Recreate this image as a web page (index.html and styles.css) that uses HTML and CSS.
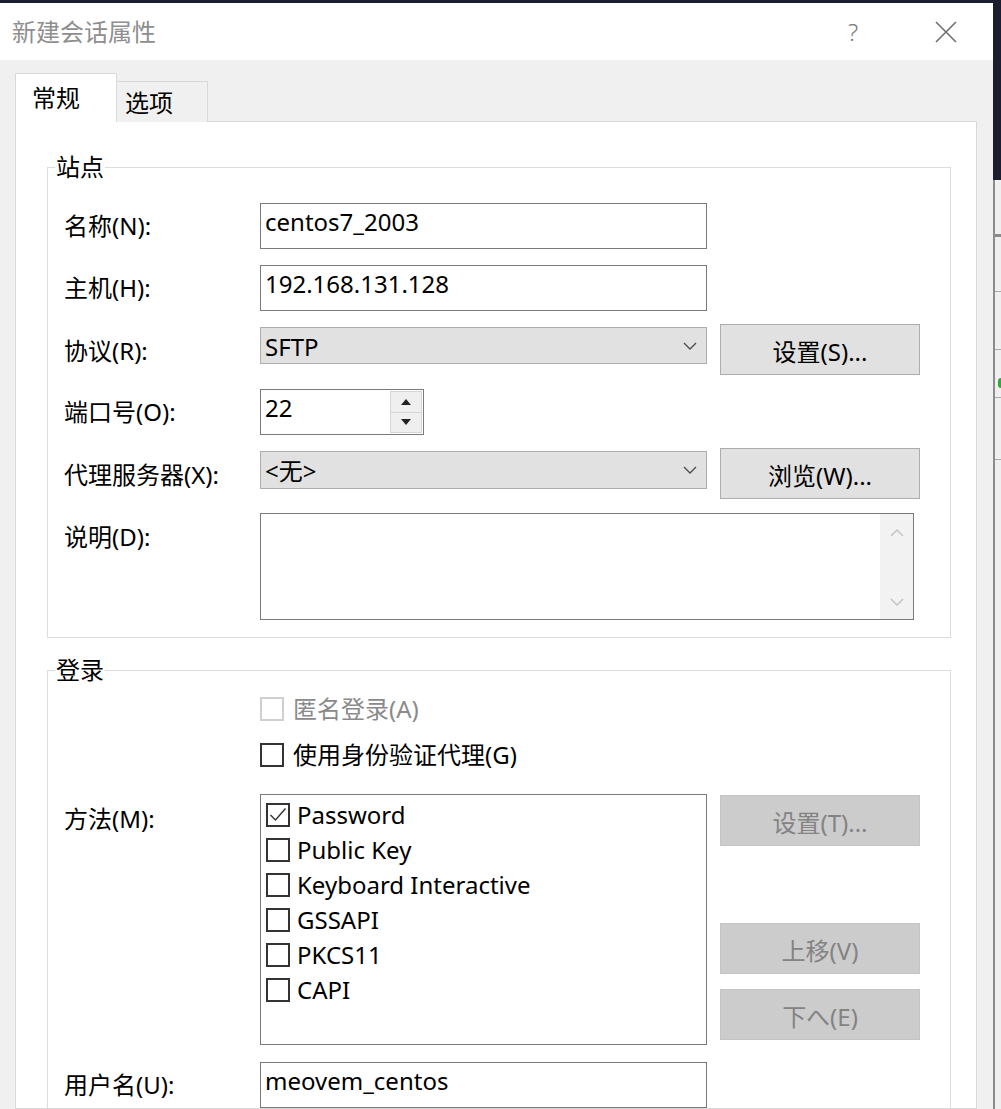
FILE: index.html
```html
<!DOCTYPE html>
<html lang="zh-CN">
<head>
<meta charset="utf-8">
<title>新建会话属性</title>
<link rel="stylesheet" href="styles.css">
</head>
<body>
<div class="screen">
  <div class="dialog">
    <div class="titlebar">
      <div class="title">新建会话属性</div>
      <div class="help">?</div>
      <svg class="close" width="24" height="24" viewBox="0 0 24 24"><path d="M2 2 L22 22 M22 2 L2 22" stroke="#6e6e6e" stroke-width="1.6" fill="none"/></svg>
    </div>
    <div class="dbody">
      <div class="tabs">
        <div class="tab tab-active">常规</div>
        <div class="tab tab-idle">选项</div>
      </div>
      <div class="panel">
        <fieldset class="group group-site">
          <legend>站点</legend>
          <div class="frow">
            <div class="lbl">名称(N):</div>
            <div class="input">centos7_2003</div>
          </div>
          <div class="frow mt16">
            <div class="lbl">主机(H):</div>
            <div class="input">192.168.131.128</div>
          </div>
          <div class="frow frow-top mt13">
            <div class="lbl lbl-sel">协议(R):</div>
            <div class="select sel-37"><span>SFTP</span><svg width="14" height="8" viewBox="0 0 14 8"><polyline points="1,1 7,7 13,1" fill="none" stroke="#4a4a4a" stroke-width="1.3"/></svg></div>
            <div class="btn">设置(S)...</div>
          </div>
          <div class="frow mt14">
            <div class="lbl">端口号(O):</div>
            <div class="input port"><span class="port-val">22</span>
              <div class="spin"><span class="spin-b"><i class="tri-up"></i></span><span class="spin-b"><i class="tri-down"></i></span></div>
            </div>
          </div>
          <div class="frow frow-top mt13">
            <div class="lbl lbl-sel">代理服务器(X):</div>
            <div class="select sel-38"><span>&lt;无&gt;</span><svg width="14" height="8" viewBox="0 0 14 8"><polyline points="1,1 7,7 13,1" fill="none" stroke="#4a4a4a" stroke-width="1.3"/></svg></div>
            <div class="btn">浏览(W)...</div>
          </div>
          <div class="frow frow-top mt14">
            <div class="lbl lbl-area">说明(D):</div>
            <div class="textarea">
              <div class="vscroll">
                <svg width="14" height="8" viewBox="0 0 14 8"><polyline points="1,7 7,1 13,7" fill="none" stroke="#c4c4c4" stroke-width="1.5"/></svg>
                <svg width="14" height="8" viewBox="0 0 14 8"><polyline points="1,1 7,7 13,1" fill="none" stroke="#c4c4c4" stroke-width="1.5"/></svg>
              </div>
            </div>
          </div>
        </fieldset>

        <fieldset class="group group-login">
          <legend>登录</legend>
          <div class="cbrow disabled">
            <span class="cb cb-dis"></span><span>匿名登录(A)</span>
          </div>
          <div class="cbrow cbrow-2">
            <span class="cb"></span><span>使用身份验证代理(G)</span>
          </div>
          <div class="frow frow-top mt27">
            <div class="lbl lbl-list">方法(M):</div>
            <div class="list">
              <div class="item"><span class="cb cb-on"><svg width="20" height="20" viewBox="0 0 20 20"><polyline points="2.5,10 7.5,15 17.5,3.5" fill="none" stroke="#333" stroke-width="1.4"/></svg></span>Password</div>
              <div class="item"><span class="cb"></span>Public Key</div>
              <div class="item"><span class="cb"></span>Keyboard Interactive</div>
              <div class="item"><span class="cb"></span>GSSAPI</div>
              <div class="item"><span class="cb"></span>PKCS11</div>
              <div class="item"><span class="cb"></span>CAPI</div>
            </div>
            <div class="btncol">
              <div class="btn btn-dis b1">设置(T)...</div>
              <div class="btn btn-dis b2">上移(V)</div>
              <div class="btn btn-dis b3">下へ(E)</div>
            </div>
          </div>
          <div class="frow mt17">
            <div class="lbl">用户名(U):</div>
            <div class="input">meovem_centos</div>
          </div>
        </fieldset>
      </div>
    </div>
  </div>
  <div class="behind">
    <div class="behind-top"></div>
    <div class="behind-low">
      <div class="bl bl1"></div>
      <div class="bl bl2"></div>
      <div class="bl bl3"></div>
      <div class="bl bl4"><span class="dot"></span></div>
      <div class="bl bl5"></div>
    </div>
  </div>
</div>
</body>
</html>
```

FILE: styles.css
```css
* { box-sizing: border-box; }
html, body { margin: 0; padding: 0; }
body {
  background: #1d1d30;
  font-family: "Noto Sans", "Noto Sans CJK SC", sans-serif;
  font-size: 24px;
  color: #000;
  overflow: hidden;
}
.screen {
  display: flex;
  height: 1109px;
  padding-top: 3px;
  overflow: hidden;
}
.dialog {
  width: 993px;
  flex-shrink: 0;
  background: #f0f0f0;
  display: flex;
  flex-direction: column;
  overflow: hidden;
}
.titlebar {
  height: 57px;
  flex-shrink: 0;
  background: #fff;
  display: flex;
  align-items: center;
  padding-left: 12px;
  padding-right: 35px;
}
.title { flex: 1; color: #8e8e8e; line-height: 30px; }
.help { color: #7a7a7a; width: 14px; margin-right: 72px; line-height: 30px; font-weight: 300; }
.close { display: block; }

.dbody {
  flex: 1;
  display: flex;
  flex-direction: column;
  padding: 13px 16px 0 15px;
  min-height: 0;
}
.tabs {
  display: flex;
  align-items: flex-end;
  margin-bottom: -1px;
  position: relative;
  z-index: 1;
}
.tab {
  border: 1px solid #d9d9d9;
  border-bottom: none;
  line-height: 30px;
}
.tab-active {
  width: 102px;
  height: 49px;
  background: #fff;
  padding: 9px 0 0 16px;
}
.tab-idle {
  width: 91px;
  height: 41px;
  background: #f0f0f0;
  border-left: none;
  padding: 6px 0 0 8px;
}
.panel {
  flex: 1;
  background: #fff;
  border: 1px solid #d9d9d9;
  padding: 0 25px 0 31px;
  min-height: 0;
  overflow: hidden;
}
.group {
  margin: 0;
  border: 1px solid #dcdcdc;
  min-width: 0;
  padding: 21px 28px 17px 16px;
}
.group legend {
  line-height: 30px;
  padding: 0 1px;
  margin-left: -9px;
}
.group-site { margin-top: 30px; }
.group-login { margin-top: 17px; padding-top: 12px; }

.frow { display: flex; align-items: center; }
.frow-top { align-items: flex-start; }
.mt13 { margin-top: 13px; }
.mt14 { margin-top: 14px; }
.mt16 { margin-top: 16px; }
.mt17 { margin-top: 17px; }
.mt27 { margin-top: 27px; }

.lbl { width: 196px; flex-shrink: 0; line-height: 30px; }
.lbl-sel { margin-top: 12px; }
.lbl-area { margin-top: 9px; }
.lbl-list { margin-top: 10px; }

.input {
  width: 447px;
  height: 46px;
  border: 1px solid #7a7a7a;
  background: #fff;
  padding: 3px 4px;
  line-height: 30px;
}
.input.port {
  width: 164px;
  display: flex;
  padding: 0 0 0 4px;
}
.port-val { flex: 1; padding-top: 3px; }
.spin {
  width: 34px;
  display: flex;
  flex-direction: column;
  padding: 1px;
}
.spin-b {
  flex: 1;
  background: #efefef;
  border: 1px solid #d6d6d6;
  display: flex;
  align-items: center;
  justify-content: center;
}
.spin-b + .spin-b { border-top: none; }
.tri-up, .tri-down { width: 0; height: 0; border-left: 5px solid transparent; border-right: 5px solid transparent; }
.tri-up { border-bottom: 6px solid #222; }
.tri-down { border-top: 6px solid #222; }

.select {
  width: 447px;
  margin-top: 3px;
  background: #e1e1e1;
  border: 1px solid #adadad;
  display: flex;
  align-items: center;
  justify-content: space-between;
  padding: 2px 9px 0 4px;
  line-height: 30px;
}
.select svg { display: block; margin-top: -2px; }
.sel-37 { height: 37px; }
.sel-38 { height: 38px; }

.btn {
  width: 200px;
  height: 51px;
  margin-left: 13px;
  background: #e1e1e1;
  border: 1px solid #adadad;
  display: flex;
  align-items: center;
  justify-content: center;
  line-height: 30px;
  padding-top: 4px;
}
.btn-dis {
  background: #cccccc;
  border-color: #c4c4c4;
  color: #838383;
}
.btncol { display: flex; flex-direction: column; margin-left: 13px; }
.btncol .btn { margin-left: 0; }
.b1 { margin-top: 1px; }
.b2 { margin-top: 77px; }
.b3 { margin-top: 15px; }

.textarea {
  width: 654px;
  height: 107px;
  border: 1px solid #7a7a7a;
  background: #fff;
  display: flex;
  justify-content: flex-end;
}
.vscroll {
  width: 33px;
  background: #f2f2f2;
  display: flex;
  flex-direction: column;
  align-items: center;
  justify-content: space-between;
  padding: 15px 0 13px;
}
.vscroll svg { display: block; }

.cbrow {
  display: flex;
  align-items: center;
  gap: 9px;
  margin-left: 196px;
  height: 24px;
  line-height: 30px;
}
.cbrow-2 { margin-top: 22px; }
.disabled { color: #8a8a8a; }
.cb {
  width: 24px;
  height: 24px;
  flex-shrink: 0;
  border: 2px solid #333;
  background: #fff;
  display: flex;
  align-items: center;
  justify-content: center;
}
.cb-dis { border-color: #cfcfcf; }
.cb svg { display: block; }

.list {
  width: 447px;
  height: 251px;
  border: 1px solid #7a7a7a;
  background: #fff;
  padding: 2px 0 0 5px;
}
.item {
  height: 35px;
  display: flex;
  align-items: center;
  gap: 7px;
  line-height: 30px;
}

.behind {
  width: 8px;
  flex-shrink: 0;
  display: flex;
  flex-direction: column;
}
.behind-top { height: 177px; background: #1d1d30; }
.behind-low {
  flex: 1;
  background: #efefef;
  border-left: 2px solid #8c8c8c;
  display: flex;
  flex-direction: column;
}
.bl { border-bottom: 1px solid #a8a8a8; position: relative; }
.bl1 { height: 57px; border-bottom: 3px solid #8a8a8a; }
.bl2 { height: 55px; }
.bl3 { height: 58px; }
.bl4 { height: 48px; }
.bl5 { height: 62px; }
.dot {
  position: absolute;
  right: -3px;
  top: 28px;
  width: 6px;
  height: 10px;
  border-radius: 3px;
  background: #2faa3a;
}
```
